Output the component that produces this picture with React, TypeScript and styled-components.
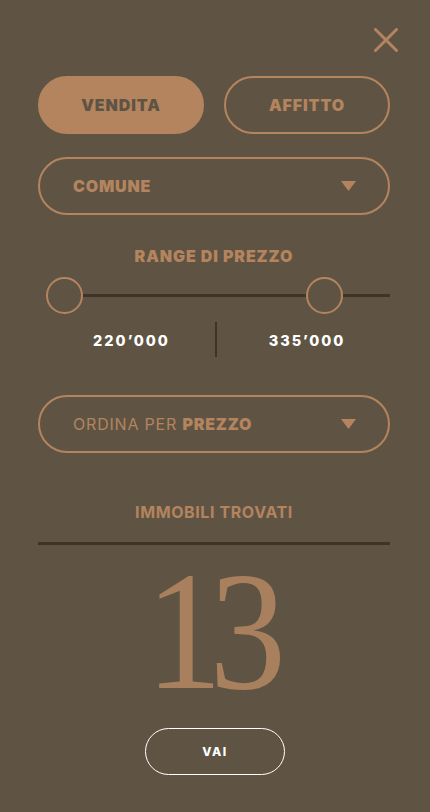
import React, { useState } from "react";
import styled, { createGlobalStyle } from "styled-components";

const ACCENT = "#b3845e";
const BG = "#5f5444";
const DARK = "#3f3427";

const GlobalStyle = createGlobalStyle`
  html, body {
    margin: 0;
    padding: 0;
    background: ${BG};
  }
  * { box-sizing: border-box; }
`;

const Page = styled.div`
  width: 430px;
  height: 812px;
  background: ${BG};
  display: flex;
  flex-direction: column;
  font-family: Inter, "Liberation Sans", sans-serif;
  overflow: hidden;
`;

const TopBar = styled.div`
  height: 76px;
  display: flex;
  justify-content: flex-end;
  align-items: flex-start;
  padding: 28px 32px 0 0;
`;

const CloseButton = styled.button`
  width: 24px;
  height: 24px;
  padding: 0;
  border: none;
  background: none;
  cursor: pointer;
  display: block;
`;

const Section = styled.div<{ $top?: number }>`
  margin: ${(p) => p.$top ?? 0}px 40px 0 38px;
`;

const ToggleRow = styled.div`
  display: grid;
  grid-template-columns: 1fr 1fr;
  gap: 20px;
`;

const Pill = styled.button<{ $active?: boolean }>`
  height: 58px;
  border-radius: 29px;
  border: 2px solid ${ACCENT};
  background: ${(p) => (p.$active ? ACCENT : "transparent")};
  color: ${(p) => (p.$active ? "#5f5444" : ACCENT)};
  font-family: Inter, "Liberation Sans", sans-serif;
  font-weight: 900;
  font-size: 16px;
  letter-spacing: 0.9px;
  cursor: pointer;
`;

const Select = styled.div`
  height: 58px;
  border-radius: 29px;
  border: 2px solid ${ACCENT};
  display: flex;
  align-items: center;
  justify-content: space-between;
  padding: 0 32px 0 33px;
  color: ${ACCENT};
  font-size: 16px;
  letter-spacing: 0.8px;
`;

const SelectLabel = styled.span<{ $light?: boolean }>`
  font-weight: ${(p) => (p.$light ? 400 : 900)};
  b { font-weight: 900; }
`;

const Heading = styled.div<{ $weight?: number; $spacing?: number }>`
  text-align: center;
  color: ${ACCENT};
  font-size: 16px;
  line-height: 18px;
  font-weight: ${(p) => p.$weight ?? 900};
  letter-spacing: ${(p) => p.$spacing ?? 0.9}px;
`;

const SliderWrap = styled.div`
  position: relative;
  height: 40px;
  margin: 10px 40px 0 46px;
`;

const Track = styled.div`
  position: absolute;
  left: 18px;
  right: 0;
  top: 19px;
  height: 3px;
  background: ${DARK};
`;

const Thumb = styled.div`
  position: absolute;
  top: 2px;
  width: 37px;
  height: 37px;
  margin-left: -18px;
  border-radius: 50%;
  border: 2px solid ${ACCENT};
  background: ${BG};
`;

const Values = styled.div`
  margin: 7px 33px 0 48px;
  height: 35px;
  display: grid;
  grid-template-columns: 167px 2px 1fr;
  align-items: center;
`;

const Value = styled.div`
  text-align: center;
  color: #fff;
  font-weight: 800;
  font-size: 14.5px;
  letter-spacing: 2px;
  padding-top: 2px;
`;

const Divider = styled.div`
  width: 2px;
  height: 35px;
  background: ${DARK};
`;

const Rule = styled.div`
  margin: 21px 40px 0 38px;
  height: 3px;
  background: ${DARK};
`;

const Count = styled.div`
  margin-top: 1px;
  padding-right: 12px;
  text-align: center;
  font-family: "Liberation Serif", "DejaVu Serif", serif;
  font-size: 170px;
  line-height: 170px;
  color: #a9805e;
  letter-spacing: -14px;
  transform: scaleX(0.9);
`;

const GoButton = styled.button`
  align-self: center;
  margin-top: 12px;
  width: 140px;
  height: 47px;
  border-radius: 24px;
  border: 1.5px solid #fff;
  background: transparent;
  color: #fff;
  font-family: Inter, "Liberation Sans", sans-serif;
  font-weight: 800;
  font-size: 12px;
  letter-spacing: 1.5px;
  cursor: pointer;
`;

const Caret = () => (
  <svg width="15" height="10" viewBox="0 0 15 10">
    <path d="M0 0 H15 L7.5 10 Z" fill={ACCENT} />
  </svg>
);

// slider scale: thumb centres travel from 18px to 344px inside the wrap
const RANGE_MIN = 220000;
const RANGE_MAX = 364200;
const THUMB_START = 18;
const THUMB_SPAN = 326;

const thumbLeft = (v: number) =>
  THUMB_START + ((v - RANGE_MIN) / (RANGE_MAX - RANGE_MIN)) * THUMB_SPAN;

const formatPrice = (v: number) =>
  String(v).replace(/\B(?=(\d{3})+(?!\d))/g, "’");

export default function App() {
  const [mode, setMode] = useState<"vendita" | "affitto">("vendita");
  const low = 220000;
  const high = 335000;

  return (
    <>
      <GlobalStyle />
      <Page>
        <TopBar>
          <CloseButton aria-label="Chiudi">
            <svg width="24" height="24" viewBox="0 0 24 24">
              <path
                d="M1.5 1.5 L22.5 22.5 M22.5 1.5 L1.5 22.5"
                stroke={ACCENT}
                strokeWidth="3"
                strokeLinecap="round"
              />
            </svg>
          </CloseButton>
        </TopBar>

        <Section>
          <ToggleRow>
            <Pill $active={mode === "vendita"} onClick={() => setMode("vendita")}>
              VENDITA
            </Pill>
            <Pill $active={mode === "affitto"} onClick={() => setMode("affitto")}>
              AFFITTO
            </Pill>
          </ToggleRow>
        </Section>

        <Section $top={23}>
          <Select>
            <SelectLabel>COMUNE</SelectLabel>
            <Caret />
          </Select>
        </Section>

        <Section $top={32}>
          <Heading>RANGE DI PREZZO</Heading>
        </Section>

        <SliderWrap>
          <Track />
          <Thumb style={{ left: thumbLeft(low) }} />
          <Thumb style={{ left: thumbLeft(high) }} />
        </SliderWrap>

        <Values>
          <Value>{formatPrice(low)}</Value>
          <Divider />
          <Value>{formatPrice(high)}</Value>
        </Values>

        <Section $top={38}>
          <Select>
            <SelectLabel $light>
              ORDINA PER <b>PREZZO</b>
            </SelectLabel>
            <Caret />
          </Select>
        </Section>

        <Section $top={50}>
          <Heading $weight={700} $spacing={0.6}>IMMOBILI TROVATI</Heading>
        </Section>

        <Rule />

        <Count>13</Count>

        <GoButton>VAI</GoButton>
      </Page>
    </>
  );
}
